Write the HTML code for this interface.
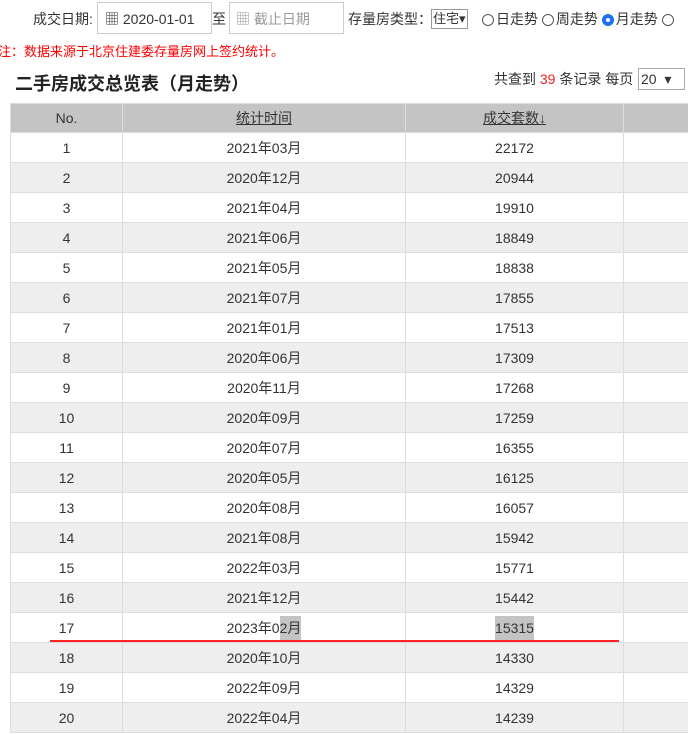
<!DOCTYPE html>
<html><head><meta charset="utf-8"><style>
body{margin:0;width:688px;height:734px;overflow:hidden;background:#fff;font-family:"Liberation Sans","Noto Sans CJK SC",sans-serif;color:#333;font-size:14px;position:relative}
.a{position:absolute;white-space:nowrap}
.box{position:absolute;border:1px solid #ccc;height:30px;top:2px;background:#fff}
table{position:absolute;left:10px;top:103px;border-collapse:collapse;width:700px}
td,th{border:1px solid #ddd;height:29px;padding:0;text-align:center;font-weight:normal;font-size:14px}
th{background:#c4c4c4;border-color:#ddd;color:#333;height:28px}
th u{text-decoration:underline}
tr:nth-child(odd) td{background:#eee}
.r{width:12px;height:12px;border:1px solid #555;border-radius:50%;display:inline-block;vertical-align:-2px;margin-right:2px;box-sizing:border-box}
</style></head><body>
<div class="a" style="left:33px;top:9px">成交日期:</div>
<div class="box" style="left:97px;width:113px"></div>
<div class="a" style="left:105px;top:9px">▦ 2020-01-01</div>
<div class="a" style="left:212px;top:9px">至</div>
<div class="box" style="left:229px;width:113px"></div>
<div class="a" style="left:236px;top:9px;color:#999">▦ 截止日期</div>
<div class="a" style="left:348px;top:9px">存量房类型：</div>
<div class="a" style="left:431px;top:9px;border:1px solid #999;height:18px;line-height:18px;font-size:13px;padding:0 1px">住宅▾</div>
<div class="a" style="left:482px;top:9px"><span class="r"></span>日走势 <span class="r"></span>周走势 <span class="r" style="border:4px solid #1a73e8"></span>月走势 <span class="r"></span></div>
<div class="a" style="left:-2px;top:41px;color:#f00;font-size:13px">注：数据来源于北京住建委存量房网上签约统计。</div>
<div class="a" style="left:15px;top:70px;font-size:18px;font-weight:bold;color:#222">二手房成交总览表（月走势）</div>
<div class="a" style="left:494px;top:69px">共查到 <span style="color:#e22">39</span> 条记录 每页</div>
<div class="a" style="left:638px;top:68px;border:1px solid #aaa;width:43px;height:20px;line-height:20px;padding-left:2px">20 &nbsp;▾</div>
<table>
<tr><th style="width:111px">No.</th><th style="width:282px"><u>统计时间</u></th><th style="width:217px"><u>成交套数↓</u></th><th></th></tr>
<tr><td>1</td><td>2021年03月</td><td>22172</td><td></td></tr>
<tr><td>2</td><td>2020年12月</td><td>20944</td><td></td></tr>
<tr><td>3</td><td>2021年04月</td><td>19910</td><td></td></tr>
<tr><td>4</td><td>2021年06月</td><td>18849</td><td></td></tr>
<tr><td>5</td><td>2021年05月</td><td>18838</td><td></td></tr>
<tr><td>6</td><td>2021年07月</td><td>17855</td><td></td></tr>
<tr><td>7</td><td>2021年01月</td><td>17513</td><td></td></tr>
<tr><td>8</td><td>2020年06月</td><td>17309</td><td></td></tr>
<tr><td>9</td><td>2020年11月</td><td>17268</td><td></td></tr>
<tr><td>10</td><td>2020年09月</td><td>17259</td><td></td></tr>
<tr><td>11</td><td>2020年07月</td><td>16355</td><td></td></tr>
<tr><td>12</td><td>2020年05月</td><td>16125</td><td></td></tr>
<tr><td>13</td><td>2020年08月</td><td>16057</td><td></td></tr>
<tr><td>14</td><td>2021年08月</td><td>15942</td><td></td></tr>
<tr><td>15</td><td>2022年03月</td><td>15771</td><td></td></tr>
<tr><td>16</td><td>2021年12月</td><td>15442</td><td></td></tr>
<tr><td>17</td><td>2023年0<span style="background:#c4c4c4;padding:4px 0">2月</span></td><td><span style="background:#c4c4c4;padding:4px 0">15315</span></td><td></td></tr>
<tr><td>18</td><td>2020年10月</td><td>14330</td><td></td></tr>
<tr><td>19</td><td>2022年09月</td><td>14329</td><td></td></tr>
<tr><td>20</td><td>2022年04月</td><td>14239</td><td></td></tr>
</table>
<div class="a" style="left:50px;top:640px;width:569px;height:2px;background:#f22"></div>
</body></html>
